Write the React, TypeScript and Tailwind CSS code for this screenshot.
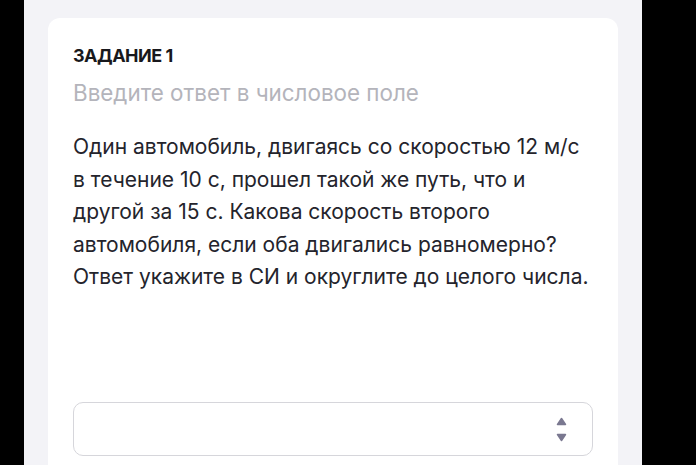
export default function App() {
  return (
    <div className="flex h-[465px] w-[696px] overflow-hidden bg-black font-['Inter',sans-serif]">
      <div className="w-[24px] shrink-0 bg-black" />
      <div className="flex-1 bg-[#f3f3f7] px-[24px] pt-[18px]">
        <div className="flex h-[480px] flex-col rounded-t-[12px] bg-white px-[25px] pt-[28px]">
          <h2 className="text-[18px] font-bold leading-[20px] tracking-[-0.5px] text-[#18181c]">ЗАДАНИЕ 1</h2>
          <p className="mt-[13px] text-[22.4px] font-normal leading-[28px] text-[#b4b4bb]">
            Введите ответ в числовое поле
          </p>
          <p className="mt-[24px] text-[21px] leading-[32.5px] text-[#24242c]">
            Один автомобиль, двигаясь со скоростью 12 м/с
            <br />
            в течение 10 с, прошел такой же путь, что и
            <br />
            другой за 15 с. Какова скорость второго
            <br />
            автомобиля, если оба двигались равномерно?
            <br />
            Ответ укажите в СИ и округлите до целого числа.
          </p>
          <div className="mt-[108px] flex h-[54px] items-center justify-end rounded-[10px] border-[1.5px] border-[#d6d6db] pr-[25px]">
            {/* number spinner arrows */}
            <svg width="11" height="26" viewBox="0 0 11 26" fill="#7a7890" strokeLinejoin="round">
              <path d="M5.5 2.5 L9.5 8.5 H1.5 Z" stroke="#7a7890" strokeWidth="1.5" />
              <path d="M5.5 24.5 L9.5 18.5 H1.5 Z" stroke="#7a7890" strokeWidth="1.5" />
            </svg>
          </div>
        </div>
      </div>
      <div className="w-[54px] shrink-0 bg-black" />
    </div>
  );
}
